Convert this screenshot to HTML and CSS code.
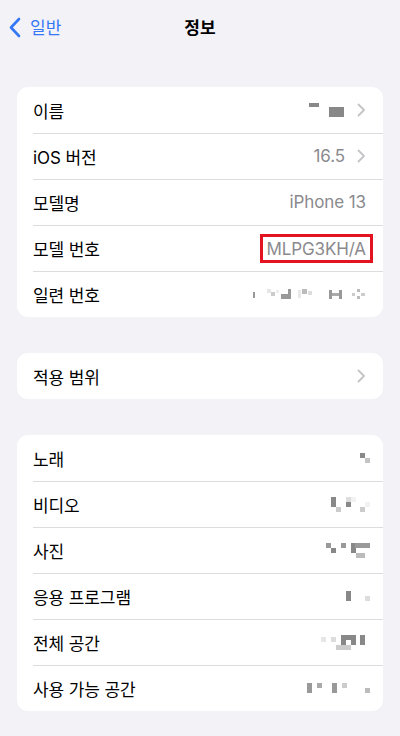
FILE: index.html
```html
<!DOCTYPE html>
<html lang="ko">
<head>
<meta charset="utf-8">
<link rel="stylesheet" href="styles.css">
</head>
<body>
<header class="nav">
  <a class="back">
    <svg class="back-icon" width="14" height="22" viewBox="0 0 14 22"><path d="M11 2L3 10.5L11 19" fill="none" stroke="#3478f6" stroke-width="2.6" stroke-linecap="round" stroke-linejoin="round"/></svg>
    <span>일반</span>
  </a>
  <h1 class="title">정보</h1>
</header>

<main class="content">
  <section class="card">
    <div class="row">
      <span class="label">이름</span>
      <span class="value">
        <svg width="36" height="16" viewBox="312 101 36 16"><rect x="312" y="102" width="10" height="4" fill="#888"/><rect x="332" y="106" width="15" height="10" fill="#888"/></svg>
        <svg class="chev" width="9" height="14" viewBox="0 0 9 14"><path d="M1.5 1.5L7 7L1.5 12.5" fill="none" stroke="#c4c4c7" stroke-width="1.8" stroke-linecap="round" stroke-linejoin="round"/></svg>
      </span>
    </div>
    <div class="row">
      <span class="label">iOS 버전</span>
      <span class="value">
        <span class="text">16.5</span>
        <svg class="chev" width="9" height="14" viewBox="0 0 9 14"><path d="M1.5 1.5L7 7L1.5 12.5" fill="none" stroke="#c4c4c7" stroke-width="1.8" stroke-linecap="round" stroke-linejoin="round"/></svg>
      </span>
    </div>
    <div class="row">
      <span class="label">모델명</span>
      <span class="value"><span class="text">iPhone 13</span></span>
    </div>
    <div class="row">
      <span class="label">모델 번호</span>
      <span class="value"><span class="text boxed">MLPG3KH/A</span></span>
    </div>
    <div class="row">
      <span class="label">일련 번호</span>
      <span class="value">
        <svg width="113" height="12" viewBox="255 291 113 12">
          <rect x="255" y="295" width="2" height="6" fill="#999"/>
          <rect x="269" y="292" width="4" height="4" fill="#e6e6e6"/>
          <rect x="273" y="295" width="4" height="4" fill="#ccc"/>
          <rect x="278" y="293" width="3" height="3" fill="#eee"/>
          <rect x="283" y="297" width="7" height="5" fill="#999"/>
          <rect x="290" y="292" width="3" height="10" fill="#999"/>
          <rect x="300" y="293" width="3" height="8" fill="#e8e8e8"/>
          <rect x="304" y="292" width="5" height="5" fill="#bbb"/>
          <rect x="310" y="294" width="4" height="4" fill="#ddd"/>
          <rect x="331" y="293" width="3" height="9" fill="#999"/>
          <rect x="334" y="296" width="7" height="3" fill="#aaa"/>
          <rect x="341" y="293" width="3" height="9" fill="#999"/>
          <rect x="354" y="296" width="3" height="3" fill="#ccc"/>
          <rect x="359" y="292" width="3" height="3" fill="#bbb"/>
          <rect x="363" y="296" width="4" height="3" fill="#ccc"/>
          <rect x="359" y="299" width="3" height="3" fill="#bbb"/>
        </svg>
      </span>
    </div>
  </section>

  <section class="card">
    <div class="row">
      <span class="label">적용 범위</span>
      <span class="value">
        <svg class="chev" width="9" height="14" viewBox="0 0 9 14"><path d="M1.5 1.5L7 7L1.5 12.5" fill="none" stroke="#c4c4c7" stroke-width="1.8" stroke-linecap="round" stroke-linejoin="round"/></svg>
      </span>
    </div>
  </section>

  <section class="card">
    <div class="row">
      <span class="label">노래</span>
      <span class="value pix">
        <svg width="10" height="10" viewBox="361 448 10 10"><rect x="361" y="448" width="5" height="5" fill="#888"/><rect x="366" y="453" width="5" height="5" fill="#c4c4c4"/></svg>
      </span>
    </div>
    <div class="row">
      <span class="label">비디오</span>
      <span class="value pix">
        <svg width="39" height="15" viewBox="332 497 39 15"><rect x="332" y="497" width="5" height="10" fill="#888"/><rect x="337" y="507" width="5" height="5" fill="#ccc"/><rect x="347" y="497" width="5" height="5" fill="#ddd"/><rect x="347" y="502" width="5" height="5" fill="#888"/><rect x="352" y="497" width="5" height="5" fill="#f2f2f2"/><rect x="361" y="507" width="5" height="5" fill="#ccc"/><rect x="366" y="502" width="5" height="5" fill="#f2f2f2"/></svg>
      </span>
    </div>
    <div class="row">
      <span class="label">사진</span>
      <span class="value pix">
        <svg width="44" height="15" viewBox="327 540 44 15"><rect x="327" y="540" width="5" height="5" fill="#999"/><rect x="332" y="545" width="5" height="5" fill="#888"/><rect x="342" y="540" width="5" height="5" fill="#999"/><rect x="352" y="540" width="5" height="10" fill="#888"/><rect x="356" y="540" width="15" height="5" fill="#999"/><rect x="357" y="550" width="9" height="5" fill="#bbb"/></svg>
      </span>
    </div>
    <div class="row">
      <span class="label">응용 프로그램</span>
      <span class="value pix">
        <svg width="24" height="10" viewBox="347 590 24 10"><rect x="347" y="590" width="5" height="10" fill="#888"/><rect x="366" y="595" width="5" height="5" fill="#ddd"/></svg>
      </span>
    </div>
    <div class="row">
      <span class="label">전체 공간</span>
      <span class="value pix">
        <svg width="49" height="15" viewBox="318 633 49 15"><rect x="318" y="635" width="5" height="5" fill="#e6e6e6"/><rect x="328" y="635" width="5" height="5" fill="#ddd"/><rect x="338" y="633" width="15" height="5" fill="#888"/><rect x="338" y="633" width="5" height="10" fill="#888"/><rect x="348" y="633" width="5" height="10" fill="#888"/><rect x="357" y="633" width="5" height="10" fill="#888"/><rect x="333" y="643" width="15" height="5" fill="#ccc"/></svg>
      </span>
    </div>
    <div class="row">
      <span class="label">사용 가능 공간</span>
      <span class="value pix">
        <svg width="63" height="10" viewBox="308 683 63 10"><rect x="308" y="683" width="5" height="10" fill="#999"/><rect x="318" y="683" width="5" height="5" fill="#aaa"/><rect x="333" y="683" width="5" height="10" fill="#999"/><rect x="343" y="683" width="5" height="5" fill="#ccc"/><rect x="366" y="688" width="5" height="5" fill="#bbb"/></svg>
      </span>
    </div>
  </section>
</main>
</body>
</html>
```

FILE: styles.css
```css
* { box-sizing: border-box; }

html, body {
  margin: 0;
  padding: 0;
}

body {
  width: 400px;
  height: 736px;
  overflow: hidden;
  background: #f2f2f7;
  font-family: Inter, "Noto Sans CJK KR", "Noto Sans", sans-serif;
  color: #000;
  -webkit-font-smoothing: antialiased;
}

.nav {
  position: relative;
  height: 56px;
  display: flex;
  align-items: center;
  justify-content: center;
}

.back {
  position: absolute;
  left: 8px;
  top: 16px;
  display: flex;
  align-items: center;
  gap: 8px;
  color: #3478f6;
  font-size: 17px;
  line-height: 24px;
}

.back-icon {
  display: block;
}

.title {
  margin: 0;
  font-size: 17px;
  font-weight: 700;
  line-height: 24px;
  letter-spacing: 0.2px;
}

.content {
  padding: 31px 17px 0;
  display: flex;
  flex-direction: column;
  gap: 36px;
}

.card {
  background: #fff;
  border-radius: 11px;
  overflow: hidden;
}

.row {
  position: relative;
  height: 46px;
  display: flex;
  align-items: center;
  justify-content: space-between;
  padding: 0 17px 0 16px;
  font-size: 17px;
}

.row + .row::before {
  content: "";
  position: absolute;
  left: 16px;
  right: 0;
  top: 0;
  height: 1px;
  background: #dcdcdf;
}

.label {
  letter-spacing: -0.1px;
}

.value {
  display: flex;
  align-items: center;
  gap: 12px;
  color: #8a8a8e;
}

.value svg {
  display: block;
}

.value.pix {
  margin-right: -4px;
}

.text {
  letter-spacing: -0.1px;
}

.boxed {
  border: 3px solid #e3141f;
  padding: 2px 4px 1px 3px;
  margin-right: -7px;
}
```
